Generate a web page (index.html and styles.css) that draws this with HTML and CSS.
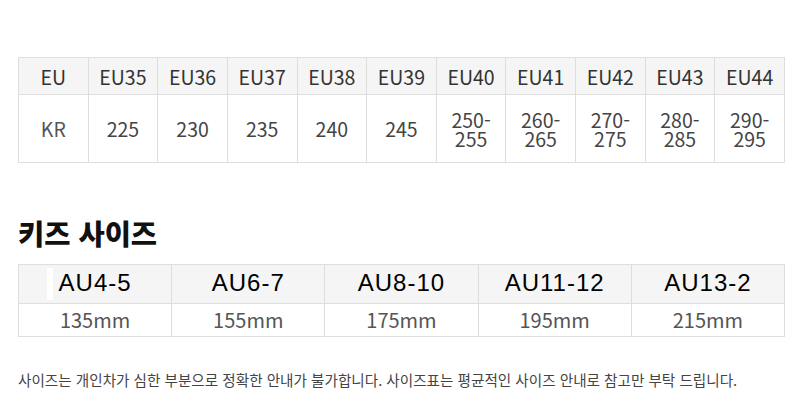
FILE: index.html
```html
<!DOCTYPE html>
<html lang="ko">
<head>
<meta charset="utf-8">
<link rel="stylesheet" href="styles.css">
</head>
<body>
<div class="page">
  <table class="size-table adult">
    <tr class="head">
      <td>EU</td><td>EU35</td><td>EU36</td><td>EU37</td><td>EU38</td><td>EU39</td><td>EU40</td><td>EU41</td><td>EU42</td><td>EU43</td><td>EU44</td>
    </tr>
    <tr class="body">
      <td class="label">KR</td><td>225</td><td>230</td><td>235</td><td>240</td><td>245</td><td>250-<br>255</td><td>260-<br>265</td><td>270-<br>275</td><td>280-<br>285</td><td>290-<br>295</td>
    </tr>
  </table>

  <h2 class="title">키즈 사이즈</h2>

  <table class="size-table kids">
    <tr class="head">
      <td class="first">AU4-5</td><td>AU6-7</td><td>AU8-10</td><td>AU11-12</td><td>AU13-2</td>
    </tr>
    <tr class="body">
      <td>135mm</td><td>155mm</td><td>175mm</td><td>195mm</td><td>215mm</td>
    </tr>
  </table>

  <p class="note">사이즈는 개인차가 심한 부분으로 정확한 안내가 불가합니다. 사이즈표는 평균적인 사이즈 안내로 참고만 부탁 드립니다.</p>
</div>
</body>
</html>
```

FILE: styles.css
```css
html, body {
  margin: 0;
  padding: 0;
  background: #ffffff;
}

.page {
  padding: 57px 0 0 18px;
  font-family: "Noto Sans CJK KR", "Noto Sans", sans-serif;
}

.size-table {
  border-collapse: collapse;
  table-layout: fixed;
  width: 767px;
}

.size-table td {
  border: 1px solid #dedede;
  text-align: center;
  vertical-align: middle;
  padding: 0;
}

.adult td {
  font-size: 19.5px;
  line-height: 19px;
}

.adult .head td {
  height: 36px;
  background: #f5f5f5;
  color: #333333;
}

.adult .body td {
  height: 67px;
  color: #444444;
}

.adult .body td.label {
  color: #555555;
}

.title {
  margin: 55px 0 16px;
  font-size: 28.5px;
  line-height: 30px;
  font-weight: 900;
  color: #111111;
  letter-spacing: 0;
}

.kids .head td {
  height: 36px;
  background: #f5f5f5;
  color: #000000;
  font-family: "Liberation Sans", Arial, sans-serif;
  font-size: 24px;
  line-height: 24px;
  letter-spacing: 1px;
  padding-bottom: 2px;
}

.kids .head td.first {
  position: relative;
}

.kids .head td.first::before {
  content: "";
  position: absolute;
  left: 28px;
  top: 3px;
  width: 6px;
  height: 32px;
  background: #ffffff;
}

.kids .body td {
  height: 32px;
  color: #555555;
  font-size: 20px;
  line-height: 20px;
}

.note {
  margin: 33px 0 0;
  font-size: 14.6px;
  line-height: 20px;
  color: #444444;
}
```
